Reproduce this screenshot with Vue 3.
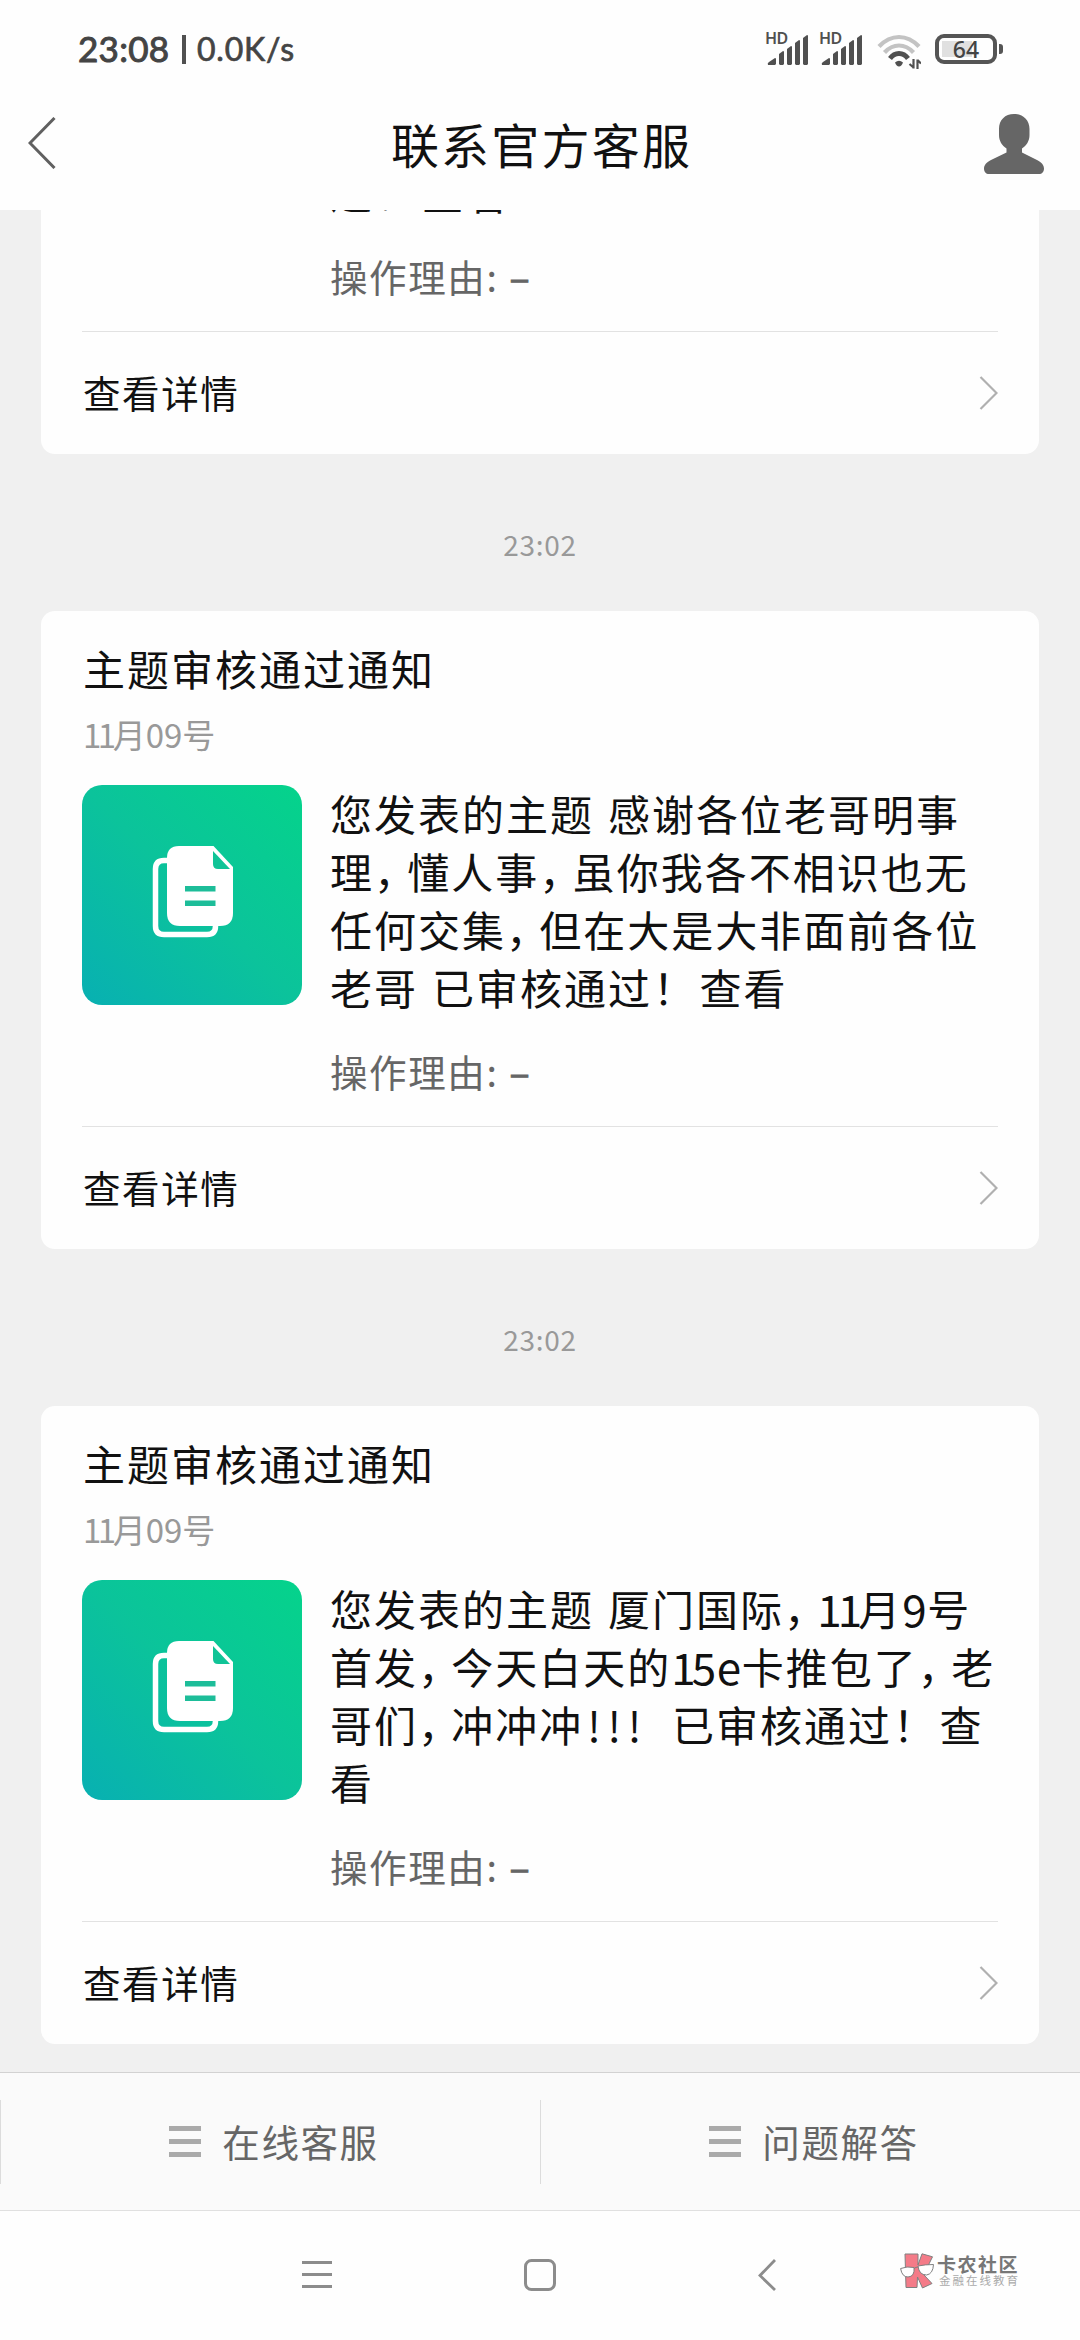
<script setup>
const notices = [
  { lines: ['过！ 查看'], partial: true },
  {
    time: '23:02',
    lines: [
      '您发表的主题 感谢各位老哥明事',
      '理，懂人事，虽你我各不相识也无',
      '任何交集，但在大是大非面前各位',
      '老哥 已审核通过！ 查看',
    ],
  },
  {
    time: '23:02',
    lines: [
      '您发表的主题 厦门国际，11月9号',
      '首发，今天白天的15e卡推包了，老',
      '哥们，冲冲冲!!!  已审核通过！ 查',
      '看',
    ],
  },
]

const tabs = ['在线客服', '问题解答']

// Punctuation and latin characters have their own advance widths.
const kinds = { '，': 'comma', '！': 'bang', '!': 'half', ' ': 'space', 1: 'one', 5: 'latin', 9: 'latin', e: 'latin' }
const split = (line) =>
  line.match(/[，！! 159e]|[^，！! 159e]+/g).map((text) => ({ text, kind: kinds[text] || 'han' }))
</script>

<template>
  <div class="screen">
    <header class="status">
      <span class="clock">23:08</span>
      <i class="bar"></i>
      <span class="speed">0.0K/s</span>
      <div class="signals">
        <div v-for="n in 2" :key="n" class="signal">
          <svg width="44" height="34" viewBox="0 0 44 34" fill="#505050">
            <path d="M2 33q-1-2 1-3l6-4q1 0 1 1v5l-1 1z" />
            <path d="M13 22l4-3q1 0 1 1v12l-1 1h-3l-1-1z" />
            <path d="M21 17l4-3q1 0 1 1v17l-1 1h-3l-1-1z" />
            <path d="M29 11l4-3q1 0 1 1v23l-1 1h-3l-1-1z" />
            <path d="M37 6l4-3q1 0 1 1v28l-1 1h-3l-1-1z" />
          </svg>
          <b>HD</b>
        </div>
        <svg class="wifi" width="44" height="36" viewBox="0 0 44 36" fill="none" stroke-width="4.2">
          <path d="M2 13.5Q11 4 22 4t20 9.500" stroke="#c3c3c3" />
          <path d="M7.500 19.500Q14 12.500 22 12.500t14.500 7" stroke="#c3c3c3" />
          <path d="M13 25.500q3.500-5 9-5t9 5" stroke="#505050" stroke-width="4.800" />
          <path d="M18 29.500q4-3.500 8 0q-1.500 4-4 4t-4-4z" fill="#505050" />
          <path d="M36.500 26v9.500M32.500 31l4 3.500M40.500 36v-9.500M44 30.500l-3.500-3.500" stroke="#505050" stroke-width="2.200" />
        </svg>
        <div class="battery"><span>64</span></div>
        <i class="nub"></i>
      </div>
    </header>

    <nav class="head">
      <svg class="back" width="28" height="52" viewBox="0 0 28 52" fill="none" stroke="#606060" stroke-width="3">
        <path d="M26.500 1L2 26l24.500 25" />
      </svg>
      <h1>联系官方客服</h1>
      <svg class="person" width="60" height="60" viewBox="0 0 60 60" fill="#666">
        <path d="M30 0C39 0 45.500 6 45.500 15v6c0 6-3 10.500-7.500 13.500v4L53 46c5 2.500 7 5.500 7 8.500C60 58 58 60 55 60H5c-3 0-5-2-5-5.500C0 51.500 2 48.500 7 46l15.500-7.500v-4C18 31.500 15 27 15 21v-6C15 6 21 0 30 0z" />
      </svg>
    </nav>

    <main class="feed">
      <template v-for="(n, i) in notices" :key="i">
        <div v-if="n.time" class="time">{{ n.time }}</div>
        <article class="card">
          <template v-if="!n.partial">
            <h2>主题审核通过通知</h2>
            <p class="date"><span class="ones">11</span>月09号</p>
          </template>
          <div class="body">
            <svg class="tile" width="220" height="220" viewBox="0 0 220 220">
              <defs>
                <linearGradient :id="'tile' + i" x1="0" y1="1" x2="1" y2="0">
                  <stop offset="0" stop-color="#08b0b2" />
                  <stop offset=".5" stop-color="#0bc39b" />
                  <stop offset="1" stop-color="#05d38b" />
                </linearGradient>
              </defs>
              <rect width="220" height="220" rx="20" :fill="'url(#tile' + i + ')'" />
              <path d="M86 75.500h-4q-8.500 0-8.500 8.500v57q0 8.500 8.500 8.500h43q8.500 0 8.500-8.500" fill="none" stroke="#fff" stroke-width="5.500" />
              <path d="M97 61h34.500L151 82v46q0 13-13 13H98q-13 0-13-13V73q0-12 12-12z" fill="#fff" />
              <path d="M131 66v13q0 5 5 5h12z" fill="#10c497" />
              <path d="M103 103.800h30.500M103 118.300h30.500" stroke="#1dbd99" stroke-width="5.500" />
            </svg>
            <div class="info">
              <p v-for="(line, k) in n.lines" :key="k" class="line"><span v-for="(t, j) in split(line)" :key="j" :class="t.kind">{{ t.text }}</span></p>
              <p class="reason">操作理由<span class="colon">:</span><span class="dash">–</span></p>
            </div>
          </div>
          <div class="more">
            <span>查看详情</span>
            <svg width="19" height="36" viewBox="0 0 19 36" fill="none" stroke="#b0b0b0" stroke-width="2.200">
              <path d="M1.500 2l16 16-16 16" />
            </svg>
          </div>
        </article>
      </template>
    </main>

    <footer class="tabs">
      <div v-for="t in tabs" :key="t" class="tab">
        <i></i>
        <div class="inner">
          <svg width="32" height="31" viewBox="0 0 32 31" stroke="#aaa" stroke-width="5">
            <path d="M0 2.500h32M0 15.500h32M0 28.500h32" />
          </svg>
          <span>{{ t }}</span>
        </div>
      </div>
    </footer>

    <div class="system">
      <svg class="recent" width="30" height="32" viewBox="0 0 30 32" stroke="#8c8c8c" stroke-width="3">
        <path d="M0 3.500h30M0 15.500h30M0 27.500h30" />
      </svg>
      <svg class="home" width="32" height="32" viewBox="0 0 32 32" fill="none" stroke="#8c8c8c" stroke-width="3">
        <rect x="1.500" y="1.500" width="29" height="29" rx="6" />
      </svg>
      <svg class="prev" width="18" height="32" viewBox="0 0 18 32" fill="none" stroke="#8c8c8c" stroke-width="2.800">
        <path d="M17 1L2 16.500 17 31" />
      </svg>
      <div class="brand">
        <svg width="35" height="36" viewBox="0 0 35 36" stroke="#808080" stroke-width="1">
          <path d="M5 1h13v11L22 .8l10.500 3L27 15l-3 7 8 8.500-9.500 4.500-5-11-.5 10.500H6z" fill="#f47b88" />
          <path d="M.6 15.500Q7 13 14 14.500q1 9-6 9.500-6 0-7.400-8.500zM18 13q7-1.500 15.500-1.500Q33 21 26.500 22 19 22 18 13z" fill="#fff" />
          <path d="M14 15.500q2-1.500 4-1.500" fill="none" />
        </svg>
        <div>
          <b>卡农社区</b>
          <small>金融在线教育</small>
        </div>
      </div>
    </div>
  </div>
</template>

<style>
body {
  margin: 0;
}
</style>

<style scoped>
* {
  box-sizing: border-box;
}
h1,
h2,
p {
  margin: 0;
  font-weight: 400;
}
svg {
  display: block;
  flex: none;
}
.screen {
  width: 1080px;
  height: 2340px;
  display: flex;
  flex-direction: column;
  overflow: hidden;
  background: #fefefe;
  color: #111;
  font-family: "Noto Sans CJK SC", sans-serif;
  white-space: nowrap;
}
.status {
  height: 92px;
  padding: 6px 77px 0 78px;
  display: flex;
  align-items: center;
  color: #444;
  font-family: Lato, sans-serif;
}
.clock {
  width: 104px;
  padding-bottom: 2px;
  font-size: 35px;
  font-weight: 400;
  letter-spacing: 0.300px;
  -webkit-text-stroke: 1px #444;
}
.bar {
  width: 4px;
  height: 29px;
  background: #505050;
}
.speed {
  padding-bottom: 2px;
  margin-left: 11px;
  font-size: 32px;
  letter-spacing: 0.800px;
  -webkit-text-stroke: 0.700px #444;
}
.signals {
  margin-left: auto;
  display: flex;
  align-items: center;
}
.signal {
  position: relative;
  width: 54px;
}
.signal b {
  position: absolute;
  left: -1px;
  top: -2px;
  font: 600 16px/16px "Noto Sans", sans-serif;
  letter-spacing: -0.500px;
  color: #505050;
}
.wifi {
  margin: 3px 14px 0 3px;
}
.battery {
  width: 62px;
  height: 30px;
  border: 4px solid #555;
  border-radius: 9px;
  background: linear-gradient(90deg, transparent 3px, #e0e0e0 3px, #e0e0e0 33px, transparent 33px) 0 3px / 100% 16px no-repeat;
  text-align: center;
  font: 500 23px/22px "Noto Sans", sans-serif;
}
.nub {
  width: 4px;
  height: 10px;
  margin-left: 2px;
  border-radius: 0 3px 3px 0;
  background: #555;
}
.head {
  height: 118px;
  padding: 0 36px 0 28px;
  display: flex;
  justify-content: space-between;
  align-items: flex-start;
}
.back {
  margin-top: 25px;
}
.head h1 {
  margin: 16px 0 0 43px;
  font-size: 48px;
  line-height: 70px;
  letter-spacing: 2.200px;
}
.person {
  margin-top: 22px;
}
.feed {
  height: 1862px;
  padding: 0 41px 28px;
  display: flex;
  flex-direction: column;
  justify-content: flex-end;
  overflow: hidden;
  background: #f0f0f0;
}
.time {
  flex: none;
  height: 157px;
  padding-top: 25px;
  text-align: center;
  font-size: 28px;
  line-height: 130px;
  letter-spacing: 0.700px;
  color: #999;
}
.card {
  flex: none;
  padding: 0 41px;
  border-radius: 14px;
  background: #fefefe;
}
.card h2 {
  padding: 28px 0 0 1px;
  font-size: 42px;
  line-height: 58px;
  letter-spacing: 2px;
}
.date {
  margin: 17px 0 31px 1px;
  font-size: 33px;
  line-height: 40px;
  color: #999;
}
.ones {
  letter-spacing: -3.500px;
}
.body {
  height: 341px;
  display: flex;
}
.info {
  height: 308px;
  padding-left: 28px;
  display: flex;
  flex-direction: column;
  justify-content: flex-end;
}
.line {
  height: 58px;
  font-size: 42px;
  line-height: 58px;
  letter-spacing: 2px;
  white-space: pre;
}
.line span {
  display: inline-block;
  vertical-align: top;
}
.line .comma {
  letter-spacing: -8.700px;
}
.line .bang {
  letter-spacing: -9.500px;
  text-indent: 1px;
}
.line .half {
  width: 20.200px;
  text-indent: 4px;
}
.line .space {
  width: 14px;
}
.line .one {
  width: 20.500px;
  font-size: 44px;
  letter-spacing: -4px;
}
.line .latin {
  width: 25px;
  font-size: 44px;
  letter-spacing: 0;
}
.reason {
  margin-top: 33px;
  height: 44px;
  font-size: 37.500px;
  line-height: 44px;
  letter-spacing: 1.600px;
  color: #666;
}
.colon {
  display: inline-block;
  width: 23px;
}
.dash {
  display: inline-block;
  -webkit-text-stroke: 1px #666;
}
.more {
  height: 123px;
  border-top: 1px solid #e2e2e2;
  display: flex;
  justify-content: space-between;
  align-items: center;
  font-size: 37.500px;
  letter-spacing: 1.600px;
}
.more span {
  margin-left: 1px;
  padding-bottom: 3px;
}
.tabs {
  height: 139px;
  border-top: 1px solid #d2d2d2;
  border-bottom: 1px solid #e0e0e0;
  display: flex;
  background: #fafafa;
}
.tab {
  flex: 1;
  display: flex;
  align-items: center;
}
.tab i {
  width: 1px;
  height: 84px;
  background: #dcdcdc;
}
.inner {
  flex: 1;
  padding-left: 7px;
  display: flex;
  align-items: center;
  justify-content: center;
  gap: 21px;
  font-size: 37.500px;
  letter-spacing: 1.600px;
  color: #666;
}
.inner span {
  padding-bottom: 3px;
}
.system {
  height: 129px;
  padding-left: 302px;
  display: flex;
  align-items: flex-start;
}
.recent,
.home,
.prev {
  margin-top: 48px;
}
.home {
  margin-left: 192px;
}
.prev {
  margin-left: 202px;
}
.brand {
  margin: 42px 0 0 124px;
  display: flex;
}
.brand div {
  margin-left: 2px;
}
.brand b,
.brand small {
  display: block;
}
.brand b {
  font-size: 19px;
  line-height: 21px;
  font-weight: 700;
  letter-spacing: 1.500px;
  color: #777;
}
.brand small {
  padding-left: 2px;
  font-size: 11.500px;
  line-height: 13px;
  letter-spacing: 2px;
  color: #aaa;
}
</style>
